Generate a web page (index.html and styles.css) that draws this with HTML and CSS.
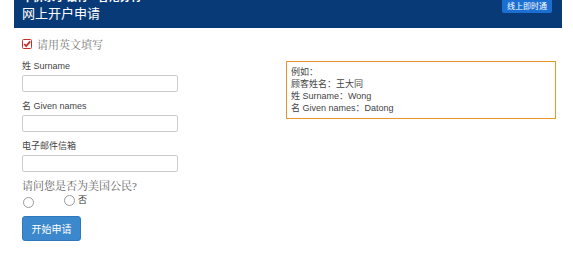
FILE: index.html
```html
<!DOCTYPE html>
<html lang="zh">
<head>
  <meta charset="UTF-8">
  <title>网上开户申请</title>
  <link rel="stylesheet" href="styles.css">
</head>
<body>
  <div class="page">
    <div class="header">
      <div class="header-titles">
        <div class="header-top">华侨永亨银行 · 香港分行</div>
        <div class="header-title">网上开户申请</div>
      </div>
      <a class="chat-btn" href="#">线上即时通</a>
    </div>

    <div class="content">
      <div class="form-col">
        <div class="notice">
          <span class="check-icon">
            <svg width="10" height="10" viewBox="0 0 10 10">
              <rect x="0.5" y="0.5" width="9" height="9" rx="1" fill="#fff" stroke="#c9302c"/>
              <path d="M2.2 5 L4.2 7.2 L8.2 2.4" fill="none" stroke="#c9302c" stroke-width="1.8"/>
            </svg>
          </span>
          请用英文填写
        </div>

        <label class="field-label">姓 Surname</label>
        <input class="field-input" type="text">

        <label class="field-label">名 Given names</label>
        <input class="field-input" type="text">

        <label class="field-label">电子邮件信箱</label>
        <input class="field-input" type="text">

        <div class="question">请问您是否为美国公民?</div>
        <div class="radios">
          <label class="radio-item"><span class="radio"></span></label>
          <label class="radio-item"><span class="radio"></span>否</label>
        </div>

        <button class="submit-btn">开始申请</button>
      </div>

      <div class="example-box">
        <div>例如：</div>
        <div>顾客姓名：王大同</div>
        <div>姓 Surname：Wong</div>
        <div>名 Given names：Datong</div>
      </div>
    </div>
  </div>
</body>
</html>
```

FILE: styles.css
```css
body {
  margin: 0;
  background: #fff;
  font-family: "Liberation Sans", "Noto Sans CJK SC", sans-serif;
  color: #333;
}

.page {
  padding: 0 11px 0 14px;
}

.header {
  height: 28px;
  background: #083a77;
  display: flex;
  justify-content: space-between;
  align-items: flex-start;
  overflow: hidden;
}

.header-titles {
  padding-left: 8px;
  margin-top: -9px;
  color: #fff;
}

.header-top {
  font-size: 11px;
  line-height: 13px;
  font-weight: bold;
}

.header-title {
  font-size: 13px;
  line-height: 20px;
}

.chat-btn {
  margin-right: 10px;
  background: #1b6fd1;
  color: #fff;
  font-size: 8px;
  line-height: 13px;
  padding: 0 5px;
  text-decoration: none;
  border-radius: 0 0 2px 2px;
}

.content {
  display: flex;
  padding-left: 8px;
}

.form-col {
  width: 156px;
  display: flex;
  flex-direction: column;
  padding-top: 10px;
}

.notice {
  font-family: "Liberation Serif", "Noto Serif CJK SC", "Noto Sans CJK SC", serif;
  font-size: 11px;
  color: #777;
  display: flex;
  align-items: center;
  gap: 5px;
  height: 12px;
}

.check-icon {
  display: flex;
}

.field-label {
  font-size: 9px;
  line-height: 12px;
  color: #444;
  margin-top: 8px;
}

.notice + .field-label {
  margin-top: 10px;
}

.field-input {
  margin: 3px 0 0;
  height: 17px;
  box-sizing: border-box;
  border: 1px solid #ccc;
  border-radius: 2px;
  width: 156px;
  padding: 0;
}

.question {
  font-family: "Liberation Serif", "Noto Serif CJK SC", "Noto Sans CJK SC", serif;
  font-size: 11px;
  line-height: 14px;
  color: #666;
  margin-top: 7px;
}

.radios {
  display: flex;
  gap: 30px;
  margin-top: 0;
  padding-left: 1px;
}

.radio-item {
  display: flex;
  align-items: flex-start;
  gap: 3px;
  font-size: 9px;
  color: #333;
}

.radio {
  width: 9px;
  height: 9px;
  border: 1px solid #999;
  border-radius: 50%;
  margin-top: 2px;
}

.radio-item:first-child .radio {
  margin-top: 4px;
}

.submit-btn {
  margin-top: 8px;
  width: 59px;
  height: 25px;
  background: #3c88cd;
  color: #fff;
  border: 1px solid #2f78bd;
  border-radius: 3px;
  font-family: "Liberation Sans", "Noto Sans CJK SC", sans-serif;
  font-size: 10px;
  padding: 0;
  cursor: pointer;
}

.example-box {
  margin-top: 33px;
  margin-left: 108px;
  width: 270px;
  height: 58px;
  box-sizing: border-box;
  border: 1px solid #e8952e;
  padding: 4px 4px;
  font-size: 9px;
  line-height: 12px;
  color: #444;
}
```
